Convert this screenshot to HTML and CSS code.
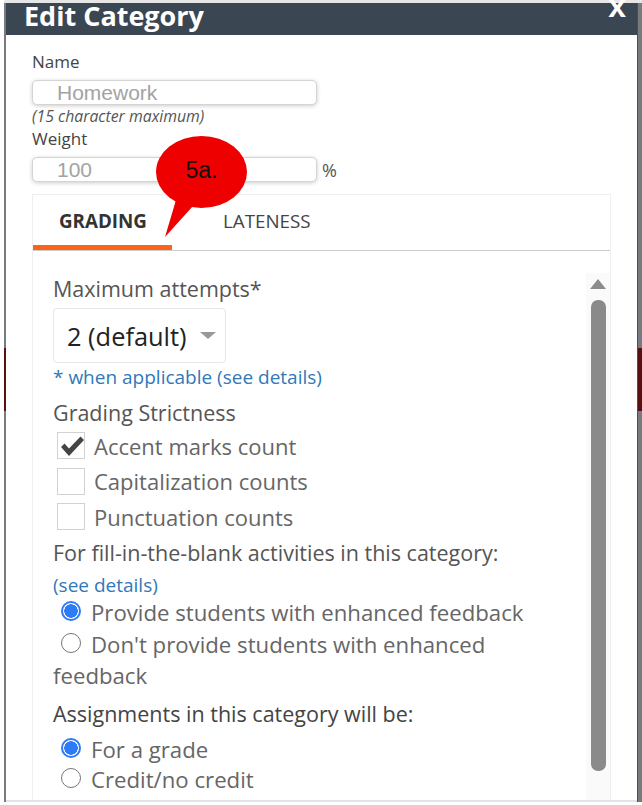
FILE: index.html
```html
<!DOCTYPE html>
<html lang="en">
<head>
    <meta charset="UTF-8">
    <meta name="viewport" content="width=device-width, initial-scale=1.0">
    <title>Edit Category</title>
    <link rel="stylesheet" href="styles.css">
</head>
<body>
    <div class="backdrop">
        <div class="modal">
            <header class="modal-header">
                <h1>Edit Category</h1>
                <span class="close">x</span>
            </header>

            <div class="modal-body">
                <label class="field-label">Name</label>
                <div class="text-input">Homework</div>
                <p class="hint">(15 character maximum)</p>
                <label class="field-label weight-label">Weight</label>
                <div class="weight-row">
                    <div class="text-input">100</div>
                    <span class="percent">%</span>
                </div>

                <div class="tab-panel">
                    <div class="tabs">
                        <div class="tab active">GRADING</div>
                        <div class="tab">LATENESS</div>
                    </div>

                    <div class="tab-content">
                        <div class="scroll-area">
                            <p class="label">Maximum attempts*</p>
                            <div class="select-box">
                                <span>2 (default)</span>
                                <span class="caret"></span>
                            </div>
                            <p class="link when-link">* when applicable (see details)</p>

                            <p class="label strict-label">Grading Strictness</p>
                            <div class="check-list">
                                <div class="check-row">
                                    <span class="checkbox">
                                        <svg viewBox="0 0 28 26" width="28" height="26"><path d="M3 14 L6.500 10.500 L11 15.500 L22.500 3.500 L26 7 L11 23 Z" fill="#444"/></svg>
                                    </span>
                                    <span>Accent marks count</span>
                                </div>
                                <div class="check-row">
                                    <span class="checkbox"></span>
                                    <span>Capitalization counts</span>
                                </div>
                                <div class="check-row">
                                    <span class="checkbox"></span>
                                    <span>Punctuation counts</span>
                                </div>
                            </div>

                            <p class="label fill-label">For fill-in-the-blank activities in this category:</p>
                            <p class="link details-link">(see details)</p>
                            <div class="radio-row"><span class="radio on"></span>Provide students with enhanced feedback</div>
                            <div class="radio-row wrap"><span class="radio"></span>Don't provide students with enhanced feedback</div>

                            <p class="label assign-label">Assignments in this category will be:</p>
                            <div class="radio-row grade-row"><span class="radio on"></span>For a grade</div>
                            <div class="radio-row credit-row"><span class="radio"></span>Credit/no credit</div>
                        </div>
                        <div class="scrollbar">
                            <span class="scroll-up"></span>
                            <span class="scroll-thumb"></span>
                        </div>
                    </div>
                </div>

                <div class="callout">
                    <svg viewBox="0 0 92 102" width="92" height="102">
                        <ellipse cx="45.500" cy="36" rx="45.500" ry="36" fill="#ee0000"/>
                        <path d="M20 64 L9 101 L37 70 Z" fill="#ee0000"/>
                    </svg>
                    <span class="callout-text">5a.</span>
                </div>
            </div>
        </div>
    </div>
</body>
</html>
```

FILE: styles.css
```css
* {
    box-sizing: border-box;
    margin: 0;
    padding: 0;
}

html, body {
    height: 100%;
    overflow: hidden;
}

body {
    background: #fff;
    font-family: "Open Sans", sans-serif;
    color: #555;
}

/* page behind the dialog, only its edges show */
.backdrop {
    height: 802px;
    margin-left: 4px;
    padding: 0 5px 0 2px;
    border-top: 3px solid #e6e6e6;
    background: linear-gradient(to bottom, #777b80 345px, #5a0f10 345px, #5a0f10 408px, #777b80 408px);
}

.modal {
    height: 799px;
    border-bottom: 2px solid #e4e4e4;
    background: #fff;
    box-shadow: 1px 0 0 #4a4f57;
    display: flex;
    flex-direction: column;
}

.modal-header {
    height: 32px;
    flex-shrink: 0;
    background: #3b4653;
    color: #fff;
    display: flex;
    justify-content: space-between;
    padding-left: 18px;
}

.modal-header h1 {
    font-size: 27px;
    font-weight: 700;
    line-height: 25px;
}

.close {
    font-family: "Liberation Sans", sans-serif;
    font-size: 32px;
    font-weight: 700;
    line-height: 12px;
    height: 12px;
    margin-right: 11px;
    margin-top: -3px;
}

.modal-body {
    position: relative;
    flex: 1;
    min-height: 0;
    padding: 17px 26px 0;
    display: flex;
    flex-direction: column;
}

.field-label {
    display: block;
    font-size: 17px;
    line-height: 20px;
    color: #444;
}

.text-input {
    width: 285px;
    height: 25px;
    margin-top: 8px;
    padding-left: 24px;
    border: 1px solid #d4d4d4;
    border-radius: 5px;
    box-shadow: 0 1px 4px rgba(0, 0, 0, 0.2);
    font-family: "Liberation Sans", sans-serif;
    font-size: 21px;
    line-height: 23px;
    color: #a3a3a3;
    background: #fff;
}

.hint {
    font-size: 15.800px;
    font-style: italic;
    line-height: 18px;
    margin-top: 2px;
    color: #555;
}

.weight-label {
    margin-top: 4px;
}

.weight-row {
    display: flex;
    align-items: flex-end;
}

.percent {
    font-size: 18px;
    line-height: 24px;
    margin-left: 5px;
    color: #555;
}

.tab-panel {
    margin-top: 12px;
    flex: 1;
    min-height: 0;
    border: 1px solid #efefef;
    border-bottom: none;
    display: flex;
    flex-direction: column;
}

.tabs {
    height: 56px;
    flex-shrink: 0;
    display: flex;
    border-bottom: 1px solid #ccc;
}

.tab {
    font-size: 18.800px;
    line-height: 52px;
    color: #444;
    padding-left: 51px;
}

.tab.active {
    width: 139px;
    height: 55px;
    padding-left: 26px;
    font-weight: 700;
    border-bottom: 5px solid #fb6318;
    color: #333;
}

.tab-content {
    flex: 1;
    min-height: 0;
    display: flex;
    justify-content: space-between;
}

.scroll-area {
    width: 520px;
    padding: 25px 0 0 20px;
}

.label {
    font-size: 21.500px;
    line-height: 26px;
    color: #555;
}

.select-box {
    width: 173px;
    height: 55px;
    margin-top: 6px;
    border: 1px solid #e6e6e6;
    border-radius: 4px;
    display: flex;
    align-items: center;
    justify-content: space-between;
    padding: 0 9px 0 13px;
    font-size: 25.400px;
    color: #222;
}

.caret {
    width: 0;
    height: 0;
    border-left: 8px solid transparent;
    border-right: 8px solid transparent;
    border-top: 7px solid #999;
}

.link {
    color: #3178b9;
    font-size: 19px;
    line-height: 24px;
}

.when-link {
    margin-top: 2px;
}

.strict-label {
    margin-top: 11px;
}

.check-list {
    margin-top: 2px;
}

.check-row {
    display: flex;
    align-items: center;
    gap: 9px;
    height: 35.500px;
    margin-left: 4px;
    font-size: 22px;
    color: #666;
}

.checkbox {
    display: block;
    width: 28px;
    height: 27px;
    flex-shrink: 0;
    border: 1px solid #d2d2d2;
}

.checkbox svg {
    display: block;
}

.fill-label {
    margin-top: 5px;
}

.details-link {
    margin-top: 7px;
}

.radio-row {
    font-size: 22.200px;
    line-height: 31px;
    color: #666;
}

.radio-row.wrap {
    margin-top: 1px;
}

.radio {
    display: inline-block;
    width: 20px;
    height: 20px;
    margin: 0 10px 0 8px;
    vertical-align: 0;
    border: 1.500px solid #767676;
    border-radius: 50%;
    background: #fff;
}

.radio.on {
    border: 2px solid #2f7bf5;
    background: radial-gradient(circle, #2f7bf5 0 6.500px, #fff 7px);
}

.assign-label {
    margin-top: 10px;
    color: #444;
}

.grade-row {
    margin-top: 7px;
}

.credit-row {
    margin-top: -1px;
}

.scrollbar {
    width: 24px;
    flex-shrink: 0;
    margin-top: 22px;
    padding-top: 6px;
    background: #fafafa;
    display: flex;
    flex-direction: column;
    align-items: center;
    gap: 11px;
}

.scroll-up {
    width: 0;
    height: 0;
    border-left: 8px solid transparent;
    border-right: 8px solid transparent;
    border-bottom: 10px solid #8c8c8c;
}

.scroll-thumb {
    width: 15px;
    height: 471px;
    background: #8a8a8a;
    border-radius: 7px;
}

.callout {
    position: absolute;
    left: 150px;
    top: 101px;
}

.callout svg {
    display: block;
}

.callout-text {
    position: absolute;
    left: 0;
    top: 21px;
    width: 91px;
    text-align: center;
    font-family: "Liberation Sans", sans-serif;
    font-size: 23px;
    line-height: 26px;
    color: #111;
}
```
